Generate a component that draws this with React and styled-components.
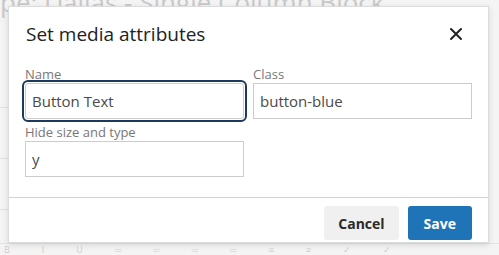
import styled, { createGlobalStyle } from 'styled-components';

const GlobalStyle = createGlobalStyle`
  html, body {
    margin: 0;
    padding: 0;
    background: #f3f3f3;
    font-family: "Open Sans", "Noto Sans", sans-serif;
  }
`;

const Page = styled.div`
  position: relative;
  width: 499px;
  height: 255px;
  overflow: hidden;
  background: #f4f4f4;
`;

const PageTitle = styled.div`
  margin-top: -13px;
  font-size: 26px;
  line-height: 30px;
  color: #c9c9c9;
  white-space: nowrap;
`;

const SideLines = styled.div`
  display: flex;
  flex-direction: column;
  width: 8px;
  margin-top: 40px;
`;

const SideLine = styled.div`
  height: 50px;
  border-bottom: 1px solid #e2e2e2;
`;

const Toolbar = styled.div`
  position: absolute;
  left: 0;
  right: 0;
  bottom: 0;
  height: 11px;
  display: flex;
  align-items: flex-start;
  gap: 32px;
  padding-left: 4px;
  border-top: 1px solid #e4e4e4;
  color: #cfcfcf;
  font-size: 9px;
  line-height: 11px;
`;

const Backdrop = styled.div`
  position: absolute;
  inset: 0;
  display: flex;
  align-items: flex-start;
  padding: 6px 0 0 8px;
`;

const Dialog = styled.div`
  width: 481px;
  height: 237px;
  box-sizing: border-box;
  background: #fff;
  border: 1px solid #dcdcdc;
  box-shadow: 0 2px 6px rgba(0, 0, 0, 0.12);
  display: flex;
  flex-direction: column;
`;

const Header = styled.div`
  display: flex;
  align-items: center;
  justify-content: space-between;
  padding: 15px 24px 16px 17px;
`;

const Title = styled.h2`
  margin: 0;
  font-size: 19px;
  line-height: 24px;
  font-weight: 400;
  color: #222;
`;

const CloseButton = styled.button`
  border: none;
  background: none;
  padding: 0;
  width: 16px;
  height: 16px;
  display: flex;
  align-items: center;
  justify-content: center;
  cursor: pointer;
`;

const Body = styled.div`
  display: grid;
  grid-template-columns: 219px 219px;
  column-gap: 9px;
  row-gap: 4px;
  padding: 3px 16px 20px 16px;
`;

const Field = styled.div`
  display: flex;
  flex-direction: column;
`;

const Label = styled.label`
  font-size: 13px;
  line-height: 18px;
  color: #777;
`;

const Input = styled.input`
  box-sizing: border-box;
  height: 36px;
  width: 100%;
  padding: 0 6px;
  border: 1px solid #cccccc;
  border-radius: ${(p) => (p.$focused ? '3px' : '0')};
  font-family: inherit;
  font-size: 15px;
  color: #4a4a4a;
  background: #fff;
  outline: ${(p) => (p.$focused ? '2px solid #1d3a5c' : 'none')};
  outline-offset: 1px;
`;

const Footer = styled.div`
  margin-top: auto;
  border-top: 1px solid #d2d2d2;
  display: flex;
  justify-content: flex-end;
  gap: 9px;
  padding: 8px 16px 2px;
`;

const Button = styled.button`
  height: 34px;
  padding: 0 ${(p) => (p.$primary ? '16px' : '14px')};
  border: none;
  border-radius: 3px;
  font-family: inherit;
  font-size: 14px;
  font-weight: 700;
  background: ${(p) => (p.$primary ? '#1f74b8' : '#f0f0f0')};
  color: ${(p) => (p.$primary ? '#fff' : '#2b2b2b')};
  cursor: pointer;
`;

export default function App() {
  return (
    <>
      <GlobalStyle />
      <Page>
        <PageTitle>pe: Dallas - Single Column Block</PageTitle>
        <SideLines>
          <SideLine />
          <SideLine />
          <SideLine />
        </SideLines>
        <Toolbar>
          <span>B</span>
          <span>I</span>
          <span>U</span>
          <span>═</span>
          <span>═</span>
          <span>═</span>
          <span>═</span>
          <span>≡</span>
          <span>≡</span>
          <span>✓</span>
          <span>✓</span>
        </Toolbar>
        <Backdrop>
          <Dialog role="dialog">
            <Header>
              <Title>Set media attributes</Title>
              <CloseButton aria-label="Close">
                <svg width="14" height="14" viewBox="0 0 14 14">
                  <path d="M2 2 L12 12 M12 2 L2 12" stroke="#222" strokeWidth="2" strokeLinecap="round" />
                </svg>
              </CloseButton>
            </Header>
            <Body>
              <Field>
                <Label>Name</Label>
                <Input $focused defaultValue="Button Text" />
              </Field>
              <Field>
                <Label>Class</Label>
                <Input defaultValue="button-blue" />
              </Field>
              <Field>
                <Label>Hide size and type</Label>
                <Input defaultValue="y" />
              </Field>
            </Body>
            <Footer>
              <Button>Cancel</Button>
              <Button $primary>Save</Button>
            </Footer>
          </Dialog>
        </Backdrop>
      </Page>
    </>
  );
}
